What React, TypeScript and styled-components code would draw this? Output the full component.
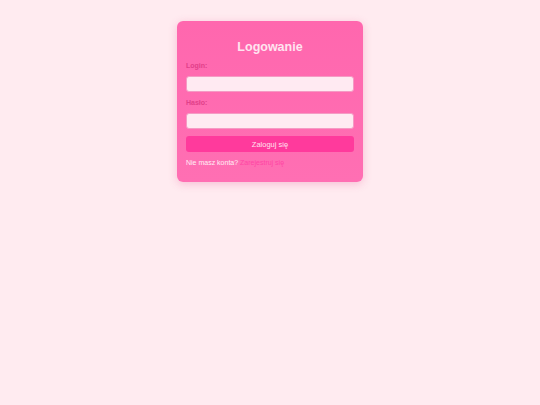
import React from "react";
import styled, { createGlobalStyle } from "styled-components";

const GlobalStyle = createGlobalStyle`
  body {
    margin: 0;
    background: #ffebf0;
    font-family: "Liberation Sans", Arial, sans-serif;
  }
`;

const Page = styled.div`
  display: flex;
  justify-content: center;
  align-items: flex-start;
  padding-top: 21px;
  min-height: 405px;
  box-sizing: border-box;
`;

const Card = styled.form`
  width: 186px;
  box-sizing: border-box;
  padding: 9px 9px 15px;
  border-radius: 6px;
  background: linear-gradient(180deg, #ff67ae 0%, #ff6fb3 100%);
  box-shadow: 0 2px 8px rgba(230, 90, 150, 0.3);
  display: flex;
  flex-direction: column;
`;

const Title = styled.h2`
  margin: 10px 0 6px;
  font-size: 12.5px;
  line-height: 15px;
  font-weight: bold;
  text-align: center;
  color: #ffe4f0;
`;

const Label = styled.label`
  display: block;
  font-size: 7px;
  line-height: 9px;
  font-weight: bold;
  color: #e2408a;
  margin-bottom: 6px;
`;

const Input = styled.input`
  display: block;
  width: 100%;
  height: 16px;
  box-sizing: border-box;
  border: 1px solid #f59ac4;
  border-radius: 3px;
  background: #ffeaf2;
  margin: 0 0 6px;
  padding: 0 4px;
  font-size: 8px;
`;

const Button = styled.button`
  width: 100%;
  height: 16px;
  margin-top: 1px;
  border: none;
  border-radius: 3px;
  background: #ff3a9c;
  color: #ffe0ee;
  font-family: "Liberation Sans", Arial, sans-serif;
  font-size: 7.5px;
  padding: 0;
`;

const Footer = styled.p`
  margin: 6px 0 0;
  font-size: 7px;
  line-height: 9px;
  font-weight: normal;
  color: #ffeef5;
`;

const Link = styled.a`
  color: #ff45a4;
  text-decoration: none;
`;

export default function App() {
  return (
    <>
      <GlobalStyle />
      <Page>
        <Card onSubmit={(e) => e.preventDefault()}>
          <Title>Logowanie</Title>
          <Label htmlFor="login">Login:</Label>
          <Input id="login" type="text" />
          <Label htmlFor="haslo">Hasło:</Label>
          <Input id="haslo" type="password" />
          <Button type="submit">Zaloguj się</Button>
          <Footer>
            Nie masz konta? <Link href="#">Zarejestruj się</Link>
          </Footer>
        </Card>
      </Page>
    </>
  );
}
